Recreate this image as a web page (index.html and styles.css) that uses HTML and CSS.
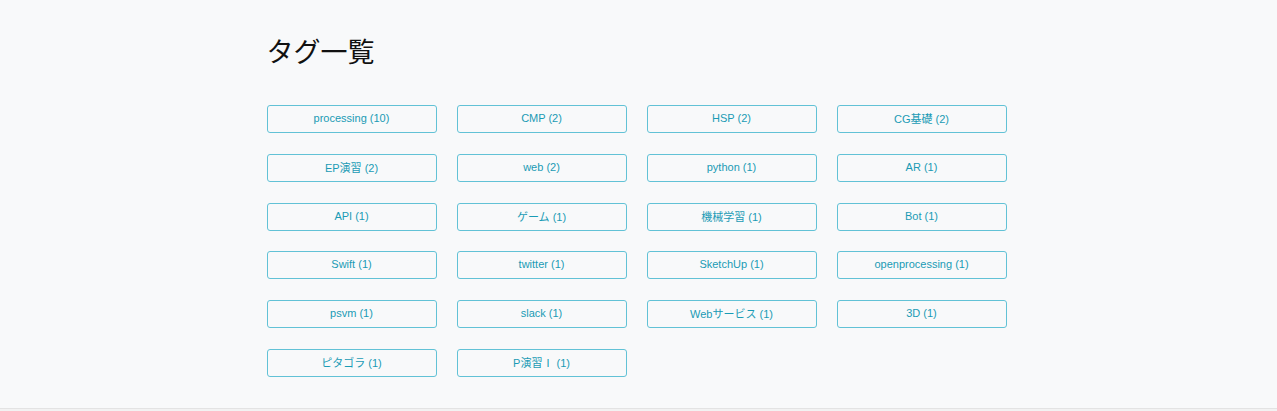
FILE: index.html
```html
<!DOCTYPE html>
<html lang="ja">
<head>
<meta charset="utf-8">
<link rel="stylesheet" href="styles.css">
</head>
<body>
<main class="page">
  <h1 class="title">タグ一覧</h1>
  <div class="tags">
    <a class="tag">processing (10)</a>
    <a class="tag">CMP (2)</a>
    <a class="tag">HSP (2)</a>
    <a class="tag">CG基礎 (2)</a>
    <a class="tag">EP演習 (2)</a>
    <a class="tag">web (2)</a>
    <a class="tag">python (1)</a>
    <a class="tag">AR (1)</a>
    <a class="tag">API (1)</a>
    <a class="tag">ゲーム (1)</a>
    <a class="tag">機械学習 (1)</a>
    <a class="tag">Bot (1)</a>
    <a class="tag">Swift (1)</a>
    <a class="tag">twitter (1)</a>
    <a class="tag">SketchUp (1)</a>
    <a class="tag">openprocessing (1)</a>
    <a class="tag">psvm (1)</a>
    <a class="tag">slack (1)</a>
    <a class="tag">Webサービス (1)</a>
    <a class="tag">3D (1)</a>
    <a class="tag">ピタゴラ (1)</a>
    <a class="tag">P演習Ⅰ (1)</a>
  </div>
</main>
<footer class="footer"></footer>
</body>
</html>
```

FILE: styles.css
```css
html, body {
  margin: 0;
  padding: 0;
  background: #f8f9fa;
}
body {
  font-family: "Liberation Sans", "Noto Sans CJK JP", sans-serif;
}
.page {
  width: 740px;
  margin: 0 auto;
  padding: 34px 0 0 0;
  height: 376px;
  box-sizing: border-box;
  position: relative;
  left: -2px;
}
.title {
  margin: 0 0 38px 0;
  font-family: "Noto Sans CJK JP", sans-serif;
  font-weight: 400;
  font-size: 27px;
  line-height: 33px;
  color: #111;
}
.tags {
  display: grid;
  grid-template-columns: repeat(4, 170px);
  column-gap: 20px;
  row-gap: 20.8px;
}
.tag {
  display: flex;
  align-items: center;
  justify-content: center;
  height: 28px;
  padding-bottom: 2px;
  box-sizing: border-box;
  border: 1px solid #62c2d6;
  border-radius: 3px;
  color: #1a9bb5;
  font-size: 11px;
  text-decoration: none;
  font-family: "Liberation Sans", "Noto Sans CJK JP", sans-serif;
}
.footer {
  margin-top: 32px;
  border-top: 1px solid #e3e3e3;
  height: 10px;
  background: #f2f2f2;
}
```
